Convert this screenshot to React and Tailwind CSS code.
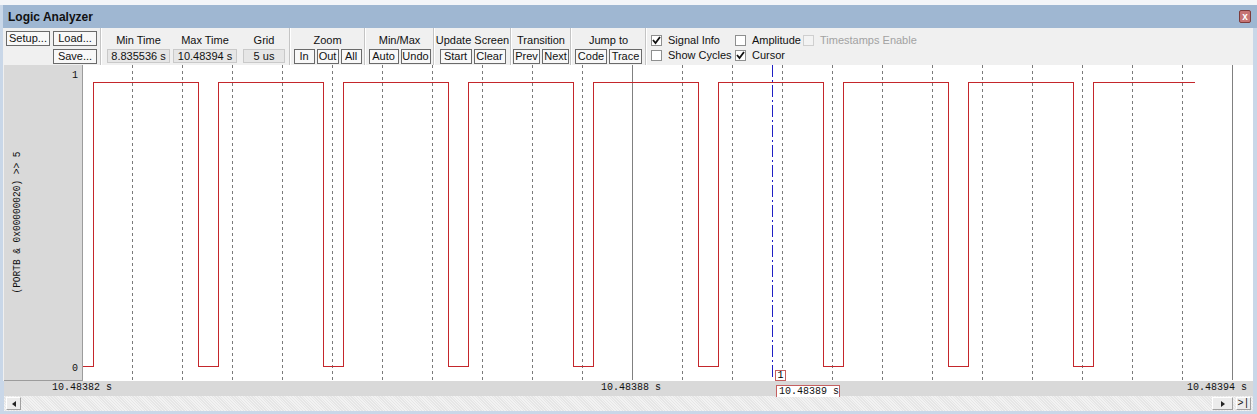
import React from 'react'

const sans = { fontFamily: '"Liberation Sans", Arial, sans-serif' }
const mono = { fontFamily: '"Liberation Mono", "DejaVu Sans Mono", monospace' }

// waveform geometry (local coords of the plot svg)
const PLOT_W = 1170
const PLOT_H = 315
const HIGH = 17.5
const LOW = 301.5

function buildWave() {
  let d = `M0 ${LOW} H10.5 V${HIGH}`
  for (let i = 0; i < 9; i++) {
    const rise = 10.5 + 125 * i
    if (i < 8) d += ` H${rise + 105} V${LOW} H${rise + 125} V${HIGH}`
    else d += ` H1112`
  }
  return d
}

const Btn = ({ w, children }) => (
  <div
    className="h-[15px] border border-[#6a6a6a] bg-[#f8f8f8] text-[11px] leading-[13px] text-[#111] text-center"
    style={{ width: w }}
  >
    {children}
  </div>
)

const Sep = () => <div className="w-[2px] h-full border-l border-[#c4c4c4] border-r border-r-white" />

const Group = ({ w, label, children }) => (
  <div className="flex flex-col items-center" style={{ width: w }}>
    <div className="mt-[5px] h-[14px] text-[11px] leading-[14px] text-[#111]">{label}</div>
    <div className="mt-[2px] flex gap-[2px]">{children}</div>
  </div>
)

const ValueBox = ({ label, value, w }) => (
  <div className="flex flex-col items-center">
    <div className="mt-[5px] h-[14px] text-[11px] leading-[14px] text-[#111]">{label}</div>
    <div
      className="mt-[2px] h-[14px] border border-[#c9c9c9] bg-[#e6e6e6] text-[11px] leading-[12px] text-center text-[#111]"
      style={{ width: w }}
    >
      {value}
    </div>
  </div>
)

const Check = ({ checked, disabled, label }) => (
  <div className="flex items-center h-[13px]">
    <div
      className={
        disabled
          ? 'w-[11px] h-[11px] border border-[#cfcfcf] bg-[#f3f3f3]'
          : 'w-[11px] h-[11px] border border-[#8e8f8f] bg-white flex items-center justify-center'
      }
    >
      {checked && (
        <svg width="9" height="9" viewBox="0 0 9 9">
          <path d="M1 4 L3.5 7 L8 1" fill="none" stroke="#111" strokeWidth="1.8" />
        </svg>
      )}
    </div>
    <span className={'ml-[6px] text-[11px] leading-[13px] ' + (disabled ? 'text-[#a2a2a2]' : 'text-[#111]')}>
      {label}
    </span>
  </div>
)

const Plot = () => {
  const grid = Array.from({ length: 23 }, (_, k) => 49.5 + 50 * k)
  return (
    <div className="relative w-[1170px] h-full bg-white">
      <svg width={PLOT_W} height={PLOT_H} className="block" shapeRendering="crispEdges">
        {grid.map((x, k) =>
          k === 10 || k === 22 ? (
            <line key={x} x1={x} y1="0" x2={x} y2={PLOT_H} stroke="#808080" />
          ) : (
            <line key={x} x1={x} y1="0" x2={x} y2={PLOT_H} stroke="#7a7a7a" strokeDasharray="3 3" />
          )
        )}
        <path d={buildWave()} fill="none" stroke="#c4262b" />
        <line x1="689.5" y1="0" x2="689.5" y2={PLOT_H} stroke="#1f1fc4" strokeDasharray="12 3 2 3" />
      </svg>
      {/* cursor marker */}
      <div
        className="absolute left-[692px] top-[305px] w-[11px] h-[11px] border border-[#c46060] bg-white text-[10px] leading-[9px] text-center text-black"
        style={mono}
      >
        1
      </div>
    </div>
  )
}

export default function App() {
  return (
    <div className="w-[1257px] h-[414px] overflow-hidden bg-[#c9d7e8]" style={sans}>
      <div className="h-[5px] bg-[#f3f5f8]" />

      {/* title bar */}
      <div className="h-[23px] ml-[3px] bg-[#9fb7d2] flex items-center justify-between pl-[5px] pr-[6px]">
        <span className="text-[12px] font-bold text-[#111]">Logic Analyzer</span>
        <div className="w-[12px] h-[13px] rounded-[2px] border border-[#7d3b3b] bg-[#c67474] flex items-center justify-center text-white text-[10px] font-bold leading-none">
          x
        </div>
      </div>

      <div className="flex">
        <div className="w-[3px]" />
        <div className="w-[1250px]">
          {/* toolbar */}
          <div className="flex h-[37px] bg-[#f0f0f0]">
            <div className="w-[97px] flex flex-col pl-[3px] pt-[3px] gap-[3px]">
              <div className="flex gap-[3px]">
                <Btn w={44}>Setup...</Btn>
                <Btn w={44}>Load...</Btn>
              </div>
              <div className="pl-[47px]">
                <Btn w={44}>Save...</Btn>
              </div>
            </div>
            <Sep />
            <div className="w-[187px] flex pl-[5px] gap-[3px]">
              <ValueBox label="Min Time" value="8.835536 s" w={63} />
              <ValueBox label="Max Time" value="10.48394 s" w={64} />
              <div className="ml-[3px]">
                <ValueBox label="Grid" value="5 us" w={42} />
              </div>
            </div>
            <Sep />
            <Group w={73} label="Zoom">
              <Btn w={21}>In</Btn>
              <Btn w={22}>Out</Btn>
              <Btn w={21}>All</Btn>
            </Group>
            <Sep />
            <Group w={67} label="Min/Max">
              <Btn w={30}>Auto</Btn>
              <Btn w={30}>Undo</Btn>
            </Group>
            <Sep />
            <Group w={75} label="Update Screen">
              <Btn w={32}>Start</Btn>
              <Btn w={32}>Clear</Btn>
            </Group>
            <Sep />
            <Group w={58} label="Transition">
              <Btn w={27}>Prev</Btn>
              <Btn w={27}>Next</Btn>
            </Group>
            <Sep />
            <Group w={73} label="Jump to">
              <Btn w={32}>Code</Btn>
              <Btn w={33}>Trace</Btn>
            </Group>
            <Sep />
            <div className="flex flex-col pl-[4px] pt-[6px] gap-[2px]">
              <div className="flex">
                <div className="w-[84px]">
                  <Check checked label="Signal Info" />
                </div>
                <div className="w-[68px]">
                  <Check label="Amplitude" />
                </div>
                <Check disabled label="Timestamps Enable" />
              </div>
              <div className="flex">
                <div className="w-[84px]">
                  <Check label="Show Cycles" />
                </div>
                <Check checked label="Cursor" />
              </div>
            </div>
          </div>

          {/* signal area */}
          <div className="flex h-[316px] bg-[#f0f0f0] pl-[1px]">
            <div className="w-[79px] h-full bg-[#d9d9d9] border-r border-b border-[#9c9c9c] flex flex-col" style={mono}>
              <div className="text-right pr-[4px] pt-[5px] text-[10px] leading-[12px] text-[#111]">1</div>
              <div className="flex-1 flex items-center pl-[7px]">
                <span className="[writing-mode:vertical-rl] [transform:rotate(180deg)_scaleY(0.86)] text-[11px] leading-[12px] text-[#111] whitespace-nowrap">
                  (PORTB &amp; 0x00000020) &gt;&gt; 5
                </span>
              </div>
              <div className="text-right pr-[4px] pb-[5px] text-[10px] leading-[12px] text-[#111]">0</div>
            </div>
            <Plot />
          </div>

          {/* time axis */}
          <div className="relative h-[15px] ml-[1px] bg-[#d9d9d9] text-[10px] leading-[14px] text-[#111]" style={mono}>
            <span className="absolute left-[48px] top-0">10.48382 s</span>
            <span className="absolute left-[597px] top-0">10.48388 s</span>
            <span className="absolute left-[1183px] top-0">10.48394 s</span>
            <div className="absolute left-[772px] top-[4px] w-[64px] h-[12px] border border-b-0 border-[#c46060] bg-white pl-[2px] leading-[11px]">
              10.48389 s
            </div>
          </div>

          {/* scrollbar */}
          <div className="h-[15px] ml-[1px] flex items-center bg-[repeating-linear-gradient(45deg,#f2f2f2_0px,#f2f2f2_1px,#e6e6e6_1px,#e6e6e6_2px)]">
            <div className="ml-[2px] w-[15px] h-[13px] border border-[#a0a0a0] border-t-white border-l-white bg-[#ececec] flex items-center justify-center">
              <svg width="4" height="6" viewBox="0 0 4 6">
                <path d="M4 0 L0 3 L4 6 Z" fill="#222" />
              </svg>
            </div>
            <div className="flex-1" />
            <div className="w-[21px] h-[13px] border border-[#a0a0a0] border-t-white border-l-white bg-[#ececec] flex items-center justify-center">
              <svg width="4" height="6" viewBox="0 0 4 6">
                <path d="M0 0 L4 3 L0 6 Z" fill="#222" />
              </svg>
            </div>
            <div className="ml-[3px] mr-[2px] w-[15px] h-[13px] border border-[#a0a0a0] border-t-white border-l-white bg-[#ececec] text-[10px] leading-[11px] text-center text-[#111]" style={mono}>
              &gt;|
            </div>
          </div>
        </div>
      </div>
    </div>
  )
}
